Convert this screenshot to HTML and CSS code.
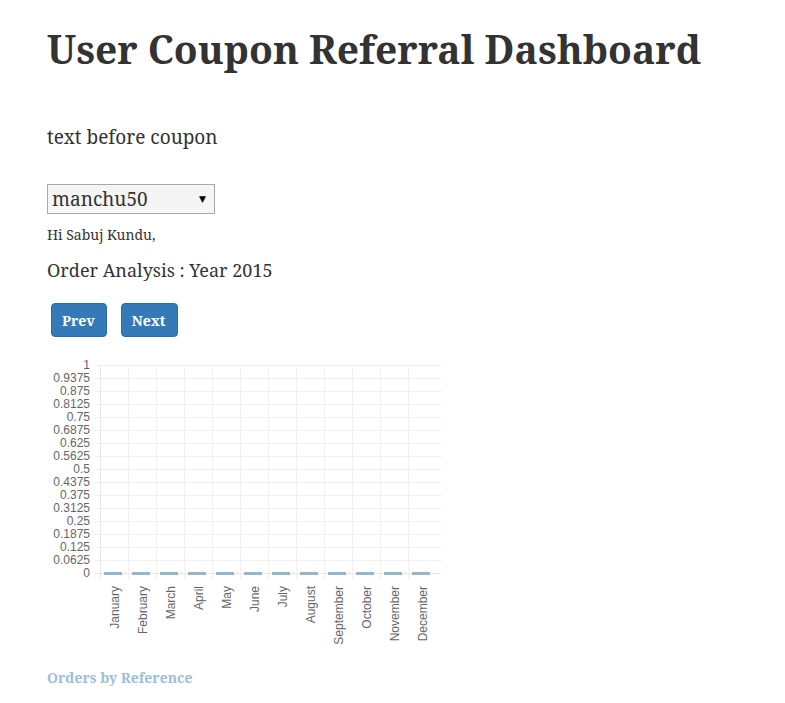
FILE: index.html
```html
<!DOCTYPE html>
<html>
<head>
<meta charset="utf-8">
<link rel="stylesheet" href="styles.css">
</head>
<body>
<div class="wrap">
  <h1 class="title">User Coupon Referral Dashboard</h1>
  <p class="intro">text before coupon</p>
  <div class="select-row">
    <div class="select">
      <span class="select-text">manchu50</span>
      <span class="select-arrow">&#9660;</span>
    </div>
  </div>
  <p class="greet">Hi Sabuj Kundu,</p>
  <h3 class="analysis">Order Analysis : Year 2015</h3>
  <div class="btns">
    <button class="btn">Prev</button>
    <button class="btn">Next</button>
  </div>
  <div class="chart">
    <svg width="400" height="290" viewBox="47 355 400 290" xmlns="http://www.w3.org/2000/svg">
      <g stroke="#f0f0f0" stroke-width="1">
        <line x1="95" y1="364.5" x2="441" y2="364.5"/>
        <line x1="95" y1="377.5" x2="441" y2="377.5"/>
        <line x1="95" y1="390.5" x2="441" y2="390.5"/>
        <line x1="95" y1="403.5" x2="441" y2="403.5"/>
        <line x1="95" y1="416.5" x2="441" y2="416.5"/>
        <line x1="95" y1="429.5" x2="441" y2="429.5"/>
        <line x1="95" y1="442.5" x2="441" y2="442.5"/>
        <line x1="95" y1="455.5" x2="441" y2="455.5"/>
        <line x1="95" y1="468.5" x2="441" y2="468.5"/>
        <line x1="95" y1="481.5" x2="441" y2="481.5"/>
        <line x1="95" y1="494.5" x2="441" y2="494.5"/>
        <line x1="95" y1="507.5" x2="441" y2="507.5"/>
        <line x1="95" y1="520.5" x2="441" y2="520.5"/>
        <line x1="95" y1="533.5" x2="441" y2="533.5"/>
        <line x1="95" y1="546.5" x2="441" y2="546.5"/>
        <line x1="95" y1="559.5" x2="441" y2="559.5"/>
        <line x1="95" y1="572.5" x2="441" y2="572.5" stroke="#e6e6e6"/>
        <line x1="100.5" y1="364" x2="100.5" y2="578" stroke="#e6e6e6"/>
        <line x1="128.5" y1="364" x2="128.5" y2="578"/>
        <line x1="156.5" y1="364" x2="156.5" y2="578"/>
        <line x1="184.5" y1="364" x2="184.5" y2="578"/>
        <line x1="212.5" y1="364" x2="212.5" y2="578"/>
        <line x1="240.5" y1="364" x2="240.5" y2="578"/>
        <line x1="268.5" y1="364" x2="268.5" y2="578"/>
        <line x1="296.5" y1="364" x2="296.5" y2="578"/>
        <line x1="324.5" y1="364" x2="324.5" y2="578"/>
        <line x1="352.5" y1="364" x2="352.5" y2="578"/>
        <line x1="380.5" y1="364" x2="380.5" y2="578"/>
        <line x1="408.5" y1="364" x2="408.5" y2="578"/>
      </g>
      <g class="ylabels" text-anchor="end">
        <text x="90" y="368">1</text>
        <text x="90" y="381">0.9375</text>
        <text x="90" y="394">0.875</text>
        <text x="90" y="407">0.8125</text>
        <text x="90" y="420">0.75</text>
        <text x="90" y="433">0.6875</text>
        <text x="90" y="446">0.625</text>
        <text x="90" y="459">0.5625</text>
        <text x="90" y="472">0.5</text>
        <text x="90" y="485">0.4375</text>
        <text x="90" y="498">0.375</text>
        <text x="90" y="511">0.3125</text>
        <text x="90" y="524">0.25</text>
        <text x="90" y="537">0.1875</text>
        <text x="90" y="550">0.125</text>
        <text x="90" y="563">0.0625</text>
        <text x="90" y="576">0</text>
      </g>
      <g fill="#97b6ca">
        <rect x="104" y="571" width="18" height="3"/>
        <rect x="132" y="571" width="18" height="3"/>
        <rect x="160" y="571" width="18" height="3"/>
        <rect x="188" y="571" width="18" height="3"/>
        <rect x="216" y="571" width="18" height="3"/>
        <rect x="244" y="571" width="18" height="3"/>
        <rect x="272" y="571" width="18" height="3"/>
        <rect x="300" y="571" width="18" height="3"/>
        <rect x="328" y="571" width="18" height="3"/>
        <rect x="356" y="571" width="18" height="3"/>
        <rect x="384" y="571" width="18" height="3"/>
        <rect x="412" y="571" width="18" height="3"/>
      </g>
      <g class="xlabels" text-anchor="end">
        <text transform="translate(119 585) rotate(-90)">January</text>
        <text transform="translate(147 585) rotate(-90)">February</text>
        <text transform="translate(175 585) rotate(-90)">March</text>
        <text transform="translate(203 585) rotate(-90)">April</text>
        <text transform="translate(231 585) rotate(-90)">May</text>
        <text transform="translate(259 585) rotate(-90)">June</text>
        <text transform="translate(287 585) rotate(-90)">July</text>
        <text transform="translate(315 585) rotate(-90)">August</text>
        <text transform="translate(343 585) rotate(-90)">September</text>
        <text transform="translate(371 585) rotate(-90)">October</text>
        <text transform="translate(399 585) rotate(-90)">November</text>
        <text transform="translate(427 585) rotate(-90)">December</text>
      </g>
    </svg>
  </div>
  <p class="footer-link">Orders by Reference</p>
</div>
</body>
</html>
```
FILE: styles.css
```css
html, body {
  margin: 0;
  padding: 0;
  background: #fff;
}
body {
  font-family: "Noto Serif", "Droid Serif", "DejaVu Serif", serif;
  color: #333;
}
.wrap {
  padding: 0 47px;
}
.title {
  margin: 0;
  padding-top: 27px;
  font-size: 39px;
  line-height: 43px;
  font-weight: 700;
  color: #333;
  white-space: nowrap;
}
.intro {
  margin: 53px 0 0;
  font-size: 19px;
  line-height: 28px;
}
.select-row {
  margin-top: 33px;
}
.select {
  display: flex;
  align-items: center;
  justify-content: space-between;
  box-sizing: border-box;
  width: 168px;
  height: 30px;
  padding: 0 5px 0 4px;
  border: 1px solid #a9a9a9;
  background: #f5f5f5;
}
.select-text {
  font-size: 19px;
  color: #333;
}
.select-arrow {
  font-family: "DejaVu Sans", sans-serif;
  font-size: 9px;
  color: #000;
  margin-right: 3px;
}
.greet {
  margin: 11px 0 0;
  font-size: 14px;
  line-height: 20px;
}
.analysis {
  margin: 13px 0 0;
  font-size: 18px;
  line-height: 24px;
  font-weight: 400;
}
.btns {
  display: flex;
  gap: 14px;
  margin-top: 21px;
  padding-left: 4px;
}
.btn {
  font-family: "Noto Serif", "Droid Serif", "DejaVu Serif", serif;
  font-size: 14px;
  font-weight: 700;
  color: #fff;
  background: #337ab7;
  border: 1px solid #2e6da4;
  border-radius: 4px;
  height: 34px;
  padding: 0 11px 0 10px;
  cursor: pointer;
}
.chart {
  margin-top: 19px;
  height: 290px;
}
.chart svg {
  display: block;
}
.ylabels text, .xlabels text {
  font-family: "Liberation Sans", Arial, sans-serif;
  font-size: 12px;
  fill: #666;
}
.footer-link {
  margin: 22px 0 0;
  font-size: 14px;
  line-height: 19px;
  font-weight: 700;
  color: #9cc0d5;
}
```
